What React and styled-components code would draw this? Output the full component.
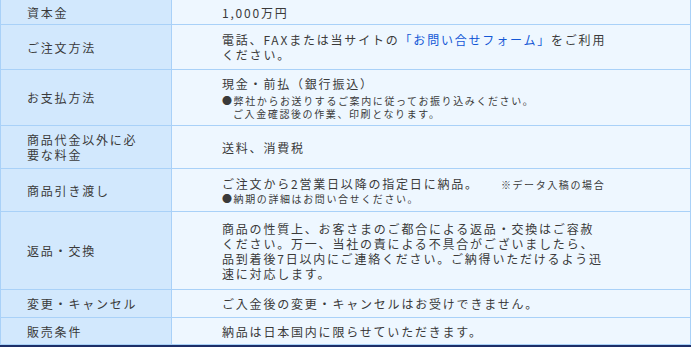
import React from 'react';
import styled, { createGlobalStyle } from 'styled-components';

const GlobalStyle = createGlobalStyle`
    body {
        margin: 0;
        background-color: #ffffff;
        font-family: "Noto Sans CJK JP", "Noto Sans", sans-serif;
    }
`;

const Table = styled.div`
    width: 691px;
    box-sizing: border-box;
    display: grid;
    grid-template-columns: 170px 1fr;
    grid-template-rows: 24px 44px 55px 42px 42px 77px 27px 26px;
    gap: 1px;
    background-color: #a9d1f8;
    border-left: 1px solid #a9d1f8;
    border-right: 1px solid #a9d1f8;
    border-bottom: 1px solid #a9d1f8;
    color: #3a3a3a;
    font-size: 12px;
    line-height: 15px;
    letter-spacing: 1.8px;
`;

const Head = styled.div`
    background-color: #d2e8fd;
    display: flex;
    align-items: center;
    padding-left: 26px;
`;

const Cell = styled.div`
    background-color: #eef7ff;
    display: flex;
    flex-direction: column;
    justify-content: center;
    padding-left: 50px;
`;

const Line = styled.div`
    white-space: nowrap;
`;

const Note = styled.div`
    font-size: 10px;
    line-height: 13px;
    letter-spacing: 1.6px;
    white-space: nowrap;
    margin-top: ${(p) => p.$gap || 0}px;
    padding-left: ${(p) => (p.$indent ? 11 : 0)}px;
`;

const Aside = styled.span`
    font-size: 10px;
    letter-spacing: 1.6px;
    margin-left: 22px;
`;

const Link = styled.span`
    color: #1457d6;
`;

const Footer = styled.div`
    width: 691px;
    height: 2px;
    background-color: #1d2f68;
`;

const App = () => {
    return (
        <>
            <GlobalStyle />
            <Table>
                <Head>資本金</Head>
                <Cell><Line>1,000万円</Line></Cell>

                <Head>ご注文方法</Head>
                <Cell>
                    <Line>電話、FAXまたは当サイトの<Link>「お問い合せフォーム」</Link>をご利用</Line>
                    <Line>ください。</Line>
                </Cell>

                <Head>お支払方法</Head>
                <Cell>
                    <Line>現金・前払（銀行振込）</Line>
                    <Note $gap={3}>●弊社からお送りするご案内に従ってお振り込みください。</Note>
                    <Note $indent>ご入金確認後の作業、印刷となります。</Note>
                </Cell>

                <Head>
                    <div>商品代金以外に必<br />要な料金</div>
                </Head>
                <Cell><Line>送料、消費税</Line></Cell>

                <Head>商品引き渡し</Head>
                <Cell>
                    <Line>ご注文から2営業日以降の指定日に納品。<Aside>※データ入稿の場合</Aside></Line>
                    <Note>●納期の詳細はお問い合せください。</Note>
                </Cell>

                <Head>返品・交換</Head>
                <Cell>
                    <Line>商品の性質上、お客さまのご都合による返品・交換はご容赦</Line>
                    <Line>ください。万一、当社の責による不具合がございましたら、</Line>
                    <Line>品到着後7日以内にご連絡ください。ご納得いただけるよう迅</Line>
                    <Line>速に対応します。</Line>
                </Cell>

                <Head>変更・キャンセル</Head>
                <Cell><Line>ご入金後の変更・キャンセルはお受けできません。</Line></Cell>

                <Head>販売条件</Head>
                <Cell><Line>納品は日本国内に限らせていただきます。</Line></Cell>
            </Table>
            <Footer />
        </>
    );
};

export default App;
